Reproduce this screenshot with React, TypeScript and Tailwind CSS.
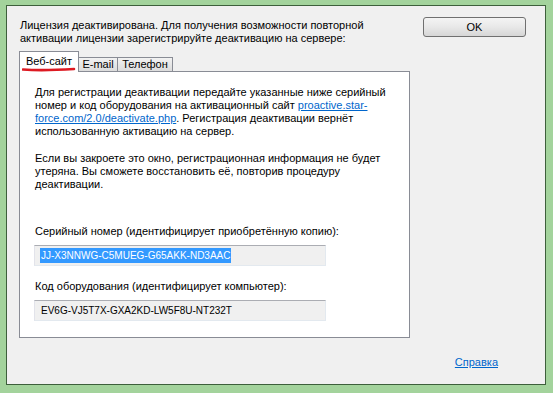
import React from "react";

const font = { fontFamily: '"Liberation Sans", Arial, sans-serif' };

const Field = ({ value, selected }: { value: string; selected?: boolean }) => (
  <div className="w-[292px] h-[21px] bg-[#f0f0f0] border border-[#e3e9ef] border-t-[#abadb3] border-l-[#e2e3ea] flex items-center pl-[5px] text-[10px]">
    <span className={selected ? "bg-[#3399ff] text-white leading-[15px] px-[1px]" : "leading-[15px] px-[1px] text-black"}>
      {value}
    </span>
  </div>
);

export default function App() {
  return (
    <div className="w-[553px] h-[393px] bg-[#a3d39c] pl-[6px] pt-[5px] pr-[7px] pb-[8px] text-[11px] leading-[13px] text-black" style={font}>
      <div className="w-full h-full border border-[#3d5f3b] bg-[#f0f0f0] flex flex-col">
        {/* header */}
        <div className="flex items-start pt-[11px] pl-[13px] pr-[19px]">
          <div className="flex-1 mt-[2px]">
            <div className="whitespace-nowrap">Лицензия деактивирована. Для получения возможности повторной</div>
            <div className="whitespace-nowrap">активации лицензии зарегистрируйте деактивацию на сервере:</div>
          </div>
          <button className="w-[103px] h-[20px] rounded-[3px] border border-[#707070] bg-gradient-to-b from-[#f4f4f4] via-[#e8e8e8] to-[#d6d6d6] text-[11px] text-black">
            OK
          </button>
        </div>

        {/* tabs */}
        <div className="flex items-end ml-[12px] mt-[6px] h-[20px]">
          <div className="relative h-[21px] w-[60px] bg-white border border-[#898c95] border-b-0 -mb-[1px] z-10 flex items-start justify-center pt-[3px]">
            Веб-сайт
            <svg className="absolute left-[2px] top-[14px]" width="54" height="6" viewBox="0 0 54 6">
              <path d="M1 3.5 Q 20 5 52 3" stroke="#dd1a22" strokeWidth="2.6" fill="none" strokeLinecap="round" />
            </svg>
          </div>
          <div className="h-[14px] w-[39px] bg-gradient-to-b from-[#f2f2f2] to-[#dcdcdc] border border-[#898c95] border-l-0 border-b-0 flex items-center justify-center">
            E-mail
          </div>
          <div className="h-[14px] w-[55px] bg-gradient-to-b from-[#f2f2f2] to-[#dcdcdc] border border-[#898c95] border-l-0 border-b-0 flex items-center justify-center">
            Телефон
          </div>
        </div>

        {/* panel */}
        <div className="ml-[12px] w-[391px] h-[267px] bg-white border border-[#898c95] pl-[15px] pt-[14px]">
          <div className="whitespace-nowrap">Для регистрации деактивации передайте указанные ниже серийный</div>
          <div className="whitespace-nowrap">
            номер и код оборудования на активационный сайт{" "}
            <span className="text-[#0066cc] underline">proactive.star-</span>
          </div>
          <div className="whitespace-nowrap">
            <span className="text-[#0066cc] underline">force.com/2.0/deactivate.php</span>. Регистрация деактивации вернёт
          </div>
          <div className="whitespace-nowrap">использованную активацию на сервер.</div>

          <div className="mt-[14px] whitespace-nowrap">Если вы закроете это окно, регистрационная информация не будет</div>
          <div className="whitespace-nowrap">утеряна. Вы сможете восстановить её, повторив процедуру</div>
          <div className="whitespace-nowrap">деактивации.</div>

          <div className="mt-[34px] whitespace-nowrap">Серийный номер (идентифицирует приобретённую копию):</div>
          <div className="mt-[7px] -ml-[1px]">
            <Field value="JJ-X3NNWG-C5MUEG-G65AKK-ND3AAC" selected />
          </div>

          <div className="mt-[14px] whitespace-nowrap">Код оборудования (идентифицирует компьютер):</div>
          <div className="mt-[7px] -ml-[1px]">
            <Field value="EV6G-VJ5T7X-GXA2KD-LW5F8U-NT232T" />
          </div>
        </div>

        {/* footer */}
        <div className="flex justify-end pr-[47px] mt-[18px]">
          <span className="text-[#0066cc] underline">Справка</span>
        </div>
      </div>
    </div>
  );
}
